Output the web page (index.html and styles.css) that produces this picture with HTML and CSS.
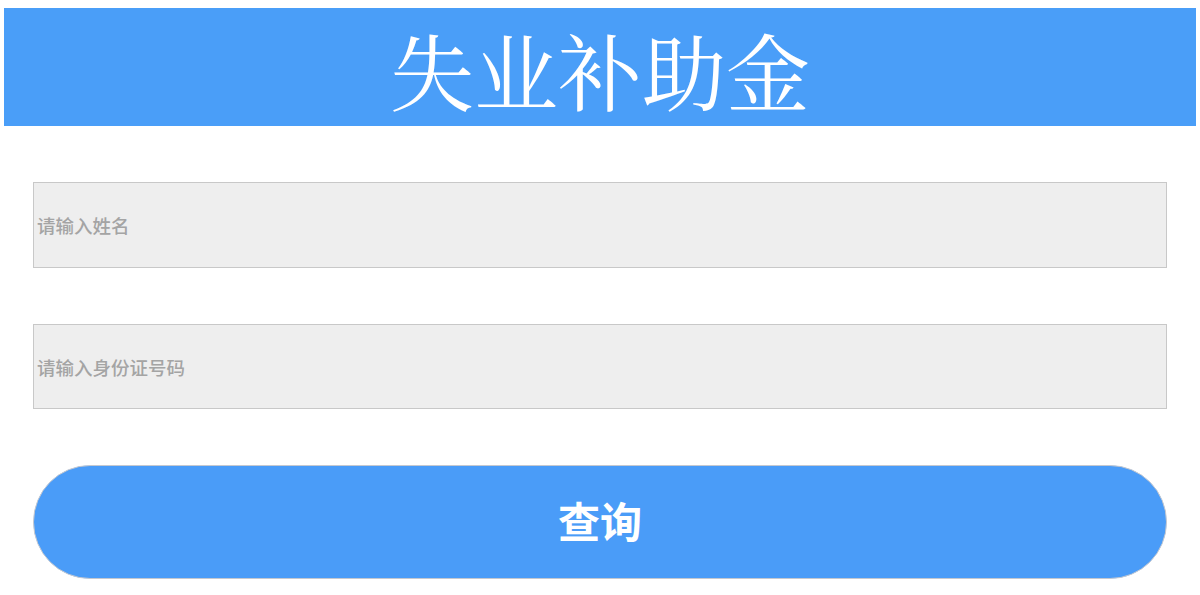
FILE: index.html
```html
<!DOCTYPE html>
<html lang="zh-CN">
<head>
<meta charset="utf-8">
<title>失业补助金</title>
<link rel="stylesheet" href="styles.css">
</head>
<body>
<div class="page">
  <header class="banner"><h1 class="title">失业补助金</h1></header>
  <form class="form">
    <div class="field"><span class="placeholder">请输入姓名</span></div>
    <div class="field field-id"><span class="placeholder">请输入身份证号码</span></div>
    <div class="btn"><span class="btn-text">查询</span></div>
  </form>
</div>
</body>
</html>
```

FILE: styles.css
```css
html, body { margin: 0; padding: 0; background: #fff; }
.page { padding: 8px 4px 0; }
.banner {
  height: 118px;
  background: #4a9ef8;
  display: flex;
  align-items: center;
  justify-content: center;
}
.title {
  margin: 0;
  color: #fff;
  font-family: "Noto Serif CJK SC", "Source Han Serif SC", "AR PL UMing CN", serif;
  font-weight: 400;
  font-size: 84px;
  line-height: 1;
  letter-spacing: 0;
  padding-top: 4px;
}
.form {
  display: flex;
  flex-direction: column;
  gap: 56px;
  padding: 56px 29px 0;
}
.field {
  box-sizing: border-box;
  height: 86px;
  background: #eeeeee;
  border: 1px solid #c8c8c8;
  display: flex;
  align-items: center;
  padding-left: 3px;
}
.field-id { height: 85px; }
.placeholder {
  font-family: "Noto Sans CJK SC", sans-serif;
  font-size: 18.5px;
  font-weight: 500;
  color: #a4a4a4;
}
.btn {
  box-sizing: border-box;
  height: 114px;
  background: #4a9cf8;
  border: 1px solid #c4c8d0;
  border-radius: 57px;
  display: flex;
  align-items: center;
  justify-content: center;
  padding-bottom: 6px;
}
.btn-text {
  font-family: "Noto Sans CJK SC", sans-serif;
  font-size: 42px;
  font-weight: 700;
  color: #fff;
}
```
